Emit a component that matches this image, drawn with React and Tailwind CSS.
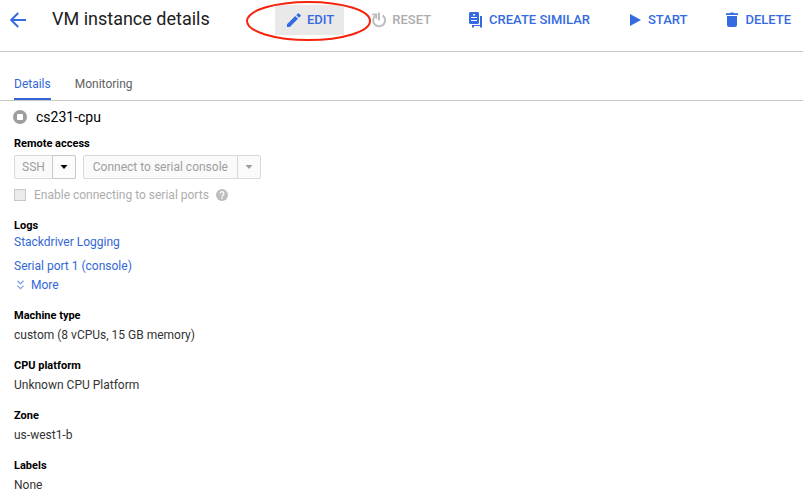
import React from "react";

function BackIcon() {
  return (
    <svg width="16" height="16" viewBox="0 0 16 16" fill="none" stroke="currentColor" strokeWidth="2" aria-hidden="true">
      <path d="M16 8H1.5M8.2 1L1.2 8l7 7" />
    </svg>
  );
}

function PencilIcon() {
  return (
    <svg className="size-4 shrink-0" viewBox="0 0 16 16" fill="currentColor" aria-hidden="true">
      <path d="M1 12.2V15h2.8l8.2-8.2L9.2 4zM14.6 4.2a.8.8 0 0 0 0-1.1L12.9 1.4a.8.8 0 0 0-1.1 0L10.2 3l2.8 2.8z" />
    </svg>
  );
}

function ResetIcon() {
  return (
    <svg className="size-4 shrink-0" viewBox="0 0 16 16" fill="none" stroke="#bdbdbd" strokeWidth="2" aria-hidden="true">
      <path d="M8 0.5v8" />
      <path d="M11.6 3.4A6 6 0 1 1 2.1 8.2C2.2 6.200 3 4.800 4.800 3" />
      <path d="M1.200 2.400h4.200V6.800" strokeWidth="1.8" />
    </svg>
  );
}

function SimilarIcon() {
  return (
    <svg className="size-4 shrink-0" viewBox="0 0 16 16" fill="currentColor" aria-hidden="true">
      <path fillRule="evenodd" d="M2 0h8l1 1v10l-1 1H2l-1-1V1zM5 2v1.500h2V2zM3 5v1h6V5zM3 8v1h6V8z" />
      <path d="M12 4h2v11.500h-2V14H6v1.500H4V13h8z" />
    </svg>
  );
}

function StartIcon() {
  return (
    <svg className="size-4 shrink-0" viewBox="0 0 16 16" fill="currentColor" aria-hidden="true">
      <path d="M3 2l11 6-11 6z" />
    </svg>
  );
}

function TrashIcon() {
  return (
    <svg className="size-4 shrink-0" viewBox="0 0 16 16" fill="currentColor" aria-hidden="true">
      <path d="M2 1.2h4L6.6.6h2.8l.6.6h4V3H2zM3 4h10v9a2 2 0 0 1-2 2H5a2 2 0 0 1-2-2z" />
    </svg>
  );
}

function Caret() {
  return (
    <svg width="8" height="4" viewBox="0 0 8 4" fill="currentColor" aria-hidden="true">
      <path d="M.5 0h7L4 4z" />
    </svg>
  );
}

function Action({ icon, children, disabled = false, active = false }) {
  return (
    <button
      type="button"
      disabled={disabled}
      className={
        "flex h-[30px] items-center gap-[5px] pr-[10px] pl-[11px] text-[13px] font-medium whitespace-nowrap " +
        (active ? "bg-[#e9e9e9] " : "") +
        (disabled ? "text-[#adadad]" : "text-[#356ae0]")
      }
    >
      {icon}
      {children}
    </button>
  );
}

function Field({ label, value }) {
  return (
    <div>
      <dt className="font-bold text-black text-[11px]">{label}</dt>
      <dd className="mt-[3px]">{value}</dd>
    </div>
  );
}

const fields = [
  ["Machine type", "custom (8 vCPUs, 15 GB memory)"],
  ["CPU platform", "Unknown CPU Platform"],
  ["Zone", "us-west1-b"],
  ["Labels", "None"],
];

export default function App() {
  return (
    <div className="min-h-screen overflow-hidden bg-white font-['Roboto',sans-serif] text-xs leading-4 text-[#333]">
      <header className="flex h-[52px] items-start border-b border-[#c8c8c8] pt-1 pl-[10px]">
        <a href="#instances" aria-label="Back" className="flex h-8 w-[42px] items-center text-[#356ae0]">
          <BackIcon />
        </a>
        <h1 className="w-[223px] shrink-0 text-lg leading-[30px] text-[#212121]">VM instance details</h1>
        <div className="flex gap-4 pt-px">
          <div className="relative">
            <Action icon={<PencilIcon />} active>EDIT</Action>
            <svg className="pointer-events-none absolute -top-1 -left-[30px]" width="128" height="42" viewBox="0 0 128 42" fill="none" aria-hidden="true">
              <ellipse cx="63.5" cy="20" rx="61.5" ry="19" stroke="#f5220c" strokeWidth="2" />
            </svg>
          </div>
          <Action icon={<ResetIcon />} disabled>RESET</Action>
          <Action icon={<SimilarIcon />}>CREATE SIMILAR</Action>
          <Action icon={<StartIcon />}>START</Action>
          <Action icon={<TrashIcon />}>DELETE</Action>
        </div>
      </header>

      <nav className="mt-6 flex gap-6 border-b border-[#c8c8c8] pl-[14px]">
        <a href="#details" aria-current="page" className="border-b-2 border-[#3367d6] pb-[6px] text-[#3367d6]">Details</a>
        <a href="#monitoring" className="text-[#616161]">Monitoring</a>
      </nav>

      <main className="pl-[14px]">
        <h2 className="-ml-px flex items-center gap-[9px] pt-[6px] text-sm leading-5 text-black">
          <svg width="14" height="14" viewBox="0 0 14 14" role="img" aria-label="Stopped">
            <circle cx="7" cy="7" r="7" fill="#9e9e9e" />
            <rect x="4" y="4" width="6" height="6" rx="1" fill="#fff" />
          </svg>
          cs231-cpu
        </h2>

        <section>
          <h3 className="mt-[9px] font-bold text-black text-[11px]">Remote access</h3>
          <div className="mt-[3px] flex gap-[7px]">
            <div className="flex h-6 rounded-xs border border-[#d9d9d9] bg-[#fafafa] text-[#9e9e9e]">
              <button type="button" disabled className="px-[7px]">SSH</button>
              <button type="button" aria-label="SSH options" className="-my-px -mr-px flex w-6 items-center justify-center rounded-r-xs border border-[#c8c8c8] bg-[#fcfcfc] text-black"><Caret /></button>
            </div>
            <div className="flex h-6 rounded-xs border border-[#d9d9d9] bg-[#fafafa] text-[#9e9e9e]">
              <button type="button" disabled className="px-[9px]">Connect to serial console</button>
              <button type="button" disabled aria-label="Serial console options" className="flex w-[23px] items-center justify-center border-l border-[#d9d9d9]"><Caret /></button>
            </div>
          </div>
          <div className="mt-2 flex items-center text-[#adadad]">
            <input id="serial" type="checkbox" disabled className="size-3 appearance-none border border-[#c8c8c8] bg-[#ebebeb]" />
            <label htmlFor="serial" className="ml-2">Enable connecting to serial ports</label>
            <svg className="ml-[7px]" width="12" height="12" viewBox="0 0 12 12" role="img" aria-label="Help">
              <circle cx="6" cy="6" r="6" fill="#bdbdbd" />
              <path d="M4.1 4.6a1.9 1.9 0 1 1 3.1 1.5C6.4 6.7 6 7 6 7.7" fill="none" stroke="#fff" strokeWidth="1.3" />
              <rect x="5.3" y="8.6" width="1.4" height="1.4" fill="#fff" />
            </svg>
          </div>
        </section>

        <section className="mt-[15px] flex flex-col items-start text-[#3367d6]">
          <h3 className="font-bold text-black text-[11px]">Logs</h3>
          <a href="#stackdriver">Stackdriver Logging</a>
          <a href="#serial-port" className="mt-2">Serial port 1 (console)</a>
          <button type="button" className="mt-[3px] ml-[3px] flex items-center gap-[7px]">
            <svg width="7" height="10" viewBox="0 0 7 10" fill="none" stroke="#84a4e6" strokeWidth="1.3" aria-hidden="true">
              <path d="M.4.8l3.1 3L6.6.8M.4 5.6l3.1 3 3.1-3" />
            </svg>
            More
          </button>
        </section>

        <dl className="mt-[15px] flex flex-col gap-[15px]">
          {fields.map(([label, value]) => (
            <Field key={label} label={label} value={value} />
          ))}
        </dl>
      </main>
    </div>
  );
}
